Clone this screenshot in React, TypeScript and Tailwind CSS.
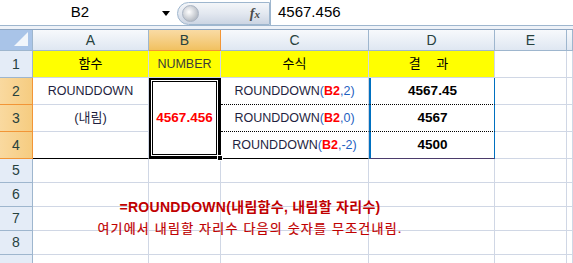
import React from "react";

const kr = "font-['Liberation_Sans','Noto_Sans_CJK_KR',sans-serif]";

const Cell = ({ className = "", children }: { className?: string; children?: React.ReactNode }) => (
  <div className={`flex items-center justify-center border-r border-b border-[#d0d7e5] ${className}`}>
    {children}
  </div>
);

const RowHead = ({ n, active }: { n?: number; active?: boolean }) => (
  <div
    className={`flex items-center justify-center border-r border-b text-[14px] text-[#27413e] ${
      active
        ? "bg-gradient-to-r from-[#f9d99f] to-[#f6cc80] border-[#f29536]"
        : "bg-[#e4ecf7] border-[#9eb6ce]"
    }`}
  >
    {n}
  </div>
);

const ColHead = ({ label, active }: { label: string; active?: boolean }) => (
  <div
    className={`flex items-center justify-center border-r border-b text-[14px] text-[#27413e] ${
      active
        ? "bg-gradient-to-b from-[#f9dba4] to-[#f1c15f] border-[#f29536]"
        : "bg-gradient-to-b from-[#f7f9fc] to-[#dfe7f2] border-[#9eb6ce]"
    }`}
  >
    {label}
  </div>
);

function Formula({ arg }: { arg: string }) {
  return (
    <span className="text-[12.5px] text-[#1f1f3f]">
      ROUNDDOWN<span className="text-[#1f5fbf]">(</span>
      <span className="text-[#ff0000] font-bold">B2</span>
      <span className="text-[#1f5fbf]">,{arg})</span>
    </span>
  );
}

export default function App() {
  return (
    <div className={`w-[573px] h-[263px] overflow-hidden bg-white ${kr}`}>
      {/* formula bar */}
      <div className="flex h-[26px] border-b border-[#9eb6ce] bg-white">
        <div className="w-[177px] relative flex items-center">
          <span className="w-[160px] text-center text-[15px] text-black">B2</span>
          <span className="absolute left-[162px] top-[11px] w-0 h-0 border-l-[4px] border-r-[4px] border-t-[5px] border-l-transparent border-r-transparent border-t-black" />
        </div>
        <div className="w-[93px] mt-[2px] h-[23px] rounded-l-full bg-gradient-to-b from-[#f4f6f9] via-[#e3e8f0] to-[#ccd5e3] border border-[#9eb6ce] flex items-center justify-between pl-[4px] pr-[9px]">
          <span className="w-[17px] h-[17px] rounded-full bg-[radial-gradient(circle_at_40%_40%,#ffffff,#b9bec6_70%)] border border-[#a9b3c2]" />
          <span className="font-['Liberation_Serif',serif] italic font-bold text-[14px] text-[#4a4a4a]">
            f<span className="text-[11px]">x</span>
          </span>
        </div>
        <div className="flex-1 border-l border-[#9eb6ce] flex items-center pl-[7px] text-[15px] text-black">
          4567.456
        </div>
      </div>
      <div className="h-[4px] bg-[#eef2f8] border-b border-[#8ea6c2]" />

      {/* sheet */}
      <div className="relative grid grid-cols-[33px_116px_72px_148px_126px_72px_1fr] grid-rows-[21px_27px_27px_27px_27px_24px_24px_24px_24px_24px]">
        {/* header row */}
        <div className="bg-[#a9c4e8] border-r border-b border-[#9eb6ce] relative">
          <span className="absolute right-[4px] bottom-[4px] w-0 h-0 border-l-[14px] border-l-transparent [border-bottom:14px_solid_#f2f6fb]" />
        </div>
        <ColHead label="A" />
        <ColHead label="B" active />
        <ColHead label="C" />
        <ColHead label="D" />
        <ColHead label="E" />
        <ColHead label="" />

        {/* row 1 */}
        <RowHead n={1} />
        <Cell className="bg-[#ffff00] border-[#6b5a8a] text-[13px] text-black">함수</Cell>
        <Cell className="bg-[#ffff00] border-[#6b5a8a] text-[12.5px] text-[#3a3a3a]">NUMBER</Cell>
        <Cell className="bg-[#ffff00] border-[#6b5a8a] text-[13px] text-black">수식</Cell>
        <Cell className="bg-[#ffff00] border-[#6b5a8a] text-[13px] text-black tracking-[6px]">결 과</Cell>
        <Cell />
        <Cell />

        {/* row 2 */}
        <RowHead n={2} active />
        <Cell className="text-[12.5px] text-[#1f1f3f]">ROUNDDOWN</Cell>
        <div className="row-span-3 flex items-center justify-center border-b border-r border-black shadow-[inset_0_0_0_2px_#000,inset_0_0_0_3px_#fff,inset_0_0_0_4px_#000] relative">
          <span className="text-[13.5px] font-bold text-[#ff0000]">4567.456</span>
          <span className="absolute -right-[3px] -bottom-[3px] w-[6px] h-[6px] bg-black border border-white" />
        </div>
        <Cell className="border-b-black [border-bottom-style:dotted]">
          <Formula arg="2" />
        </Cell>
        <Cell className="border-x-2 border-x-[#0070c0] border-b-black [border-bottom-style:dotted] text-[13.5px] font-bold text-black">
          4567.45
        </Cell>
        <Cell />
        <Cell />

        {/* row 3 */}
        <RowHead n={3} active />
        <Cell className="text-[13px] text-[#1f1f3f]">(내림)</Cell>
        <Cell className="border-b-black [border-bottom-style:dotted]">
          <Formula arg="0" />
        </Cell>
        <Cell className="border-x-2 border-x-[#0070c0] border-b-black [border-bottom-style:dotted] text-[13.5px] font-bold text-black">
          4567
        </Cell>
        <Cell />
        <Cell />

        {/* row 4 */}
        <RowHead n={4} active />
        <Cell className="border-b-black" />
        <Cell className="border-b-black">
          <Formula arg="-2" />
        </Cell>
        <Cell className="border-x-2 border-x-[#0070c0] border-b-[#4b3b6b] text-[13.5px] font-bold text-black">
          4500
        </Cell>
        <Cell />
        <Cell />

        {[5, 6, 7, 8, 0].map((n) => (
          <React.Fragment key={n}>
            <RowHead n={n || undefined} />
            <Cell />
            <Cell />
            <Cell />
            <Cell />
            <Cell />
            <Cell />
          </React.Fragment>
        ))}

        {/* note text over the grid */}
        <div className="absolute left-[0px] w-[500px] top-[167px] flex flex-col items-center gap-[2px] text-[#c00000]">
          <span className="text-[14px] font-bold leading-[20px] tracking-[0.3px]">
            =ROUNDDOWN(내림함수, 내림할 자리수)
          </span>
          <span className="text-[13px] leading-[20px] tracking-[1.2px] [-webkit-text-stroke:0.2px_#c00000]">
            여기에서 내림할 자리수 다음의 숫자를 무조건내림.
          </span>
        </div>
      </div>
    </div>
  );
}
